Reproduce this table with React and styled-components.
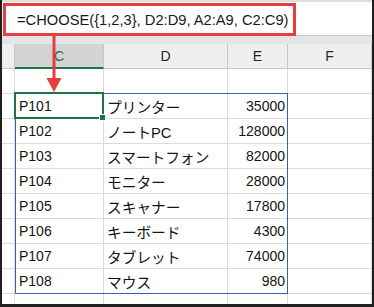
import React from 'react';
import styled, { createGlobalStyle } from 'styled-components';

const GlobalStyle = createGlobalStyle`
  html, body { margin: 0; padding: 0; background: #202020; }
  body { font-family: "Liberation Sans", "Noto Sans CJK JP", sans-serif; }
`;

const COLUMNS = '13px 89px 124px 60px 1fr';

const Frame = styled.div`
  position: relative;
  width: 374px;
  height: 307px;
  box-sizing: border-box;
  padding: 0 2px 3px 2px;
  background: #202020;
`;

const Sheet = styled.div`
  height: 100%;
  background: #fff;
  display: flex;
  flex-direction: column;
  overflow: hidden;
`;

const TopStrip = styled.div`
  flex-shrink: 0;
  height: 2px;
  background: #dedede;
`;

const FormulaBar = styled.div`
  flex-shrink: 0;
  height: 33px;
  border-bottom: 1px solid #c8c8c8;
  display: flex;
  align-items: flex-start;
  padding-left: 1px;
`;

const FormulaBox = styled.div`
  position: relative;
  z-index: 1;
  margin-top: 1px;
  box-sizing: border-box;
  width: 293px;
  height: 33px;
  border: 3px solid #e53e3e;
  background: #fff;
  display: flex;
  align-items: center;
  padding-left: 11px;
  font-size: 14.7px;
  color: #1a1a1a;
  white-space: nowrap;
`;

const Band = styled.div`
  flex-shrink: 0;
  height: 8px;
  background: #e5e5e8;
`;

const Grid = styled.div`
  position: relative;
  display: grid;
  grid-template-columns: ${COLUMNS};
  grid-auto-rows: 25px;
`;

const HeaderCell = styled.div`
  box-sizing: border-box;
  display: flex;
  align-items: center;
  justify-content: center;
  font-size: 14px;
  background: ${(p) => (p.$active ? '#d3d3d3' : '#efefef')};
  color: ${(p) => (p.$active ? '#1d6b40' : '#262626')};
  border-right: 1px solid #c6c6c6;
  border-bottom: ${(p) => (p.$active ? '2px solid #217346' : '1px solid #c6c6c6')};
`;

const Cell = styled.div`
  box-sizing: border-box;
  display: flex;
  align-items: center;
  justify-content: ${(p) => (p.$right ? 'flex-end' : 'flex-start')};
  padding: ${(p) => (p.$right ? '0 2px 0 0' : '0 0 0 4px')};
  font-size: ${(p) => (p.$wide ? '14.7px' : '14px')};
  color: #141414;
  white-space: nowrap;
  overflow: hidden;
  border-right: 1px solid #dadada;
  border-bottom: 1px solid #dadada;
  padding-left: ${(p) => (p.$wide ? '3px' : undefined)};
`;

const RangeOutline = styled.div`
  position: absolute;
  left: 13px;
  top: 49px;
  width: 273px;
  height: 201px;
  box-sizing: border-box;
  border: 1px solid #3b62b2;
  pointer-events: none;
`;

const Selection = styled.div`
  position: absolute;
  left: 12px;
  top: 48px;
  width: 90px;
  height: 27px;
  box-sizing: border-box;
  border: 2px solid #217346;
  pointer-events: none;
`;

const FillHandle = styled.span`
  position: absolute;
  right: -4px;
  bottom: -4px;
  width: 5px;
  height: 5px;
  background: #217346;
  border: 1px solid #fff;
`;

const Arrow = styled.svg`
  position: absolute;
  left: 46px;
  top: 36px;
  overflow: visible;
`;

const products = [
  ['P101', 'プリンター', 35000],
  ['P102', 'ノートPC', 128000],
  ['P103', 'スマートフォン', 82000],
  ['P104', 'モニター', 28000],
  ['P105', 'スキャナー', 17800],
  ['P106', 'キーボード', 4300],
  ['P107', 'タブレット', 74000],
  ['P108', 'マウス', 980],
];

const EmptyRow = () => (
  <>
    <Cell />
    <Cell />
    <Cell />
    <Cell />
    <Cell />
  </>
);

export default function App() {
  return (
    <>
      <GlobalStyle />
      <Frame>
        <Sheet>
          <TopStrip />
          <FormulaBar>
            <FormulaBox>=CHOOSE({'{'}1,2,3{'}'}, D2:D9, A2:A9, C2:C9)</FormulaBox>
          </FormulaBar>
          <Band />
          <Grid>
            <HeaderCell />
            <HeaderCell $active>C</HeaderCell>
            <HeaderCell>D</HeaderCell>
            <HeaderCell>E</HeaderCell>
            <HeaderCell>F</HeaderCell>

            <EmptyRow />
            {products.map(([code, name, price]) => (
              <React.Fragment key={code}>
                <Cell />
                <Cell>{code}</Cell>
                <Cell $wide>{name}</Cell>
                <Cell $right>{price}</Cell>
                <Cell />
              </React.Fragment>
            ))}
            <EmptyRow />

            <RangeOutline />
            <Selection>
              <FillHandle />
            </Selection>
          </Grid>
        </Sheet>
        <Arrow width="16" height="57" viewBox="0 0 16 57">
          <line x1="8" y1="0" x2="8" y2="43" stroke="#e53e3e" strokeWidth="3" />
          <polygon points="0.5,42 15.5,42 8,56" fill="#e53e3e" />
        </Arrow>
      </Frame>
    </>
  );
}
